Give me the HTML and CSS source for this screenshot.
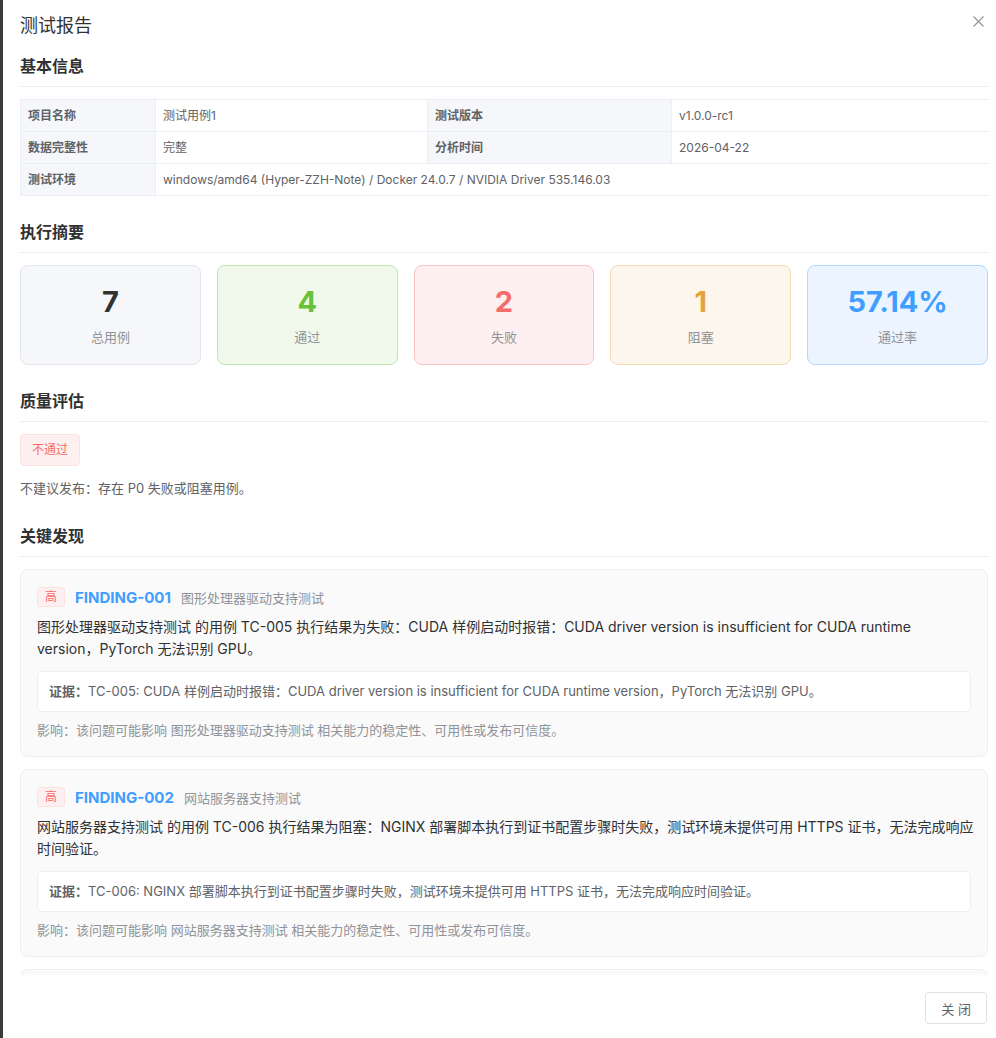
FILE: index.html
```html
<!DOCTYPE html>
<html lang="zh-CN">
<head>
<meta charset="utf-8">
<title>测试报告</title>
<link rel="stylesheet" href="styles.css">
</head>
<body>
<div class="dialog">
  <div class="dialog-header">
    <span class="dialog-title">测试报告</span>
    <button class="dialog-close" aria-label="关闭">
      <svg width="11" height="11" viewBox="0 0 11 11"><path d="M0.5 0.5 L10.5 10.5 M10.5 0.5 L0.5 10.5" stroke="#909399" stroke-width="1.1" fill="none"/></svg>
    </button>
  </div>
  <div class="dialog-body">
    <section class="section">
      <h4 class="section-title">基本信息</h4>
      <table class="desc-table">
        <colgroup><col class="c1"><col class="c2"><col class="c3"><col class="c4"></colgroup>
        <tr><td class="lbl">项目名称</td><td class="val">测试用例1</td><td class="lbl">测试版本</td><td class="val">v1.0.0-rc1</td></tr>
        <tr><td class="lbl">数据完整性</td><td class="val">完整</td><td class="lbl">分析时间</td><td class="val">2026-04-22</td></tr>
        <tr><td class="lbl">测试环境</td><td class="val" colspan="3">windows/amd64 (Hyper-ZZH-Note) / Docker 24.0.7 / NVIDIA Driver 535.146.03</td></tr>
      </table>
    </section>

    <section class="section">
      <h4 class="section-title">执行摘要</h4>
      <div class="stats">
        <div class="stat stat-total"><div class="stat-num">7</div><div class="stat-label">总用例</div></div>
        <div class="stat stat-pass"><div class="stat-num">4</div><div class="stat-label">通过</div></div>
        <div class="stat stat-fail"><div class="stat-num">2</div><div class="stat-label">失败</div></div>
        <div class="stat stat-block"><div class="stat-num">1</div><div class="stat-label">阻塞</div></div>
        <div class="stat stat-rate"><div class="stat-num">57.14%</div><div class="stat-label">通过率</div></div>
      </div>
    </section>

    <section class="section section-quality">
      <h4 class="section-title">质量评估</h4>
      <span class="tag tag-danger">不通过</span>
      <p class="verdict">不建议发布：存在 P0 失败或阻塞用例。</p>
    </section>

    <section class="section">
      <h4 class="section-title">关键发现</h4>
      <div class="finding">
        <div class="finding-head">
          <span class="tag-small">高</span>
          <span class="finding-id">FINDING-001</span>
          <span class="finding-mod">图形处理器驱动支持测试</span>
        </div>
        <p class="finding-desc">图形处理器驱动支持测试 的用例 TC-005 执行结果为失败：CUDA 样例启动时报错：CUDA driver version is insufficient for CUDA runtime version，PyTorch 无法识别 GPU。</p>
        <div class="evidence"><b>证据：</b>TC-005: CUDA 样例启动时报错：CUDA driver version is insufficient for CUDA runtime version，PyTorch 无法识别 GPU。</div>
        <p class="impact">影响：该问题可能影响 图形处理器驱动支持测试 相关能力的稳定性、可用性或发布可信度。</p>
      </div>
      <div class="finding">
        <div class="finding-head">
          <span class="tag-small">高</span>
          <span class="finding-id">FINDING-002</span>
          <span class="finding-mod">网站服务器支持测试</span>
        </div>
        <p class="finding-desc">网站服务器支持测试 的用例 TC-006 执行结果为阻塞：NGINX 部署脚本执行到证书配置步骤时失败，测试环境未提供可用 HTTPS 证书，无法完成响应时间验证。</p>
        <div class="evidence"><b>证据：</b>TC-006: NGINX 部署脚本执行到证书配置步骤时失败，测试环境未提供可用 HTTPS 证书，无法完成响应时间验证。</div>
        <p class="impact">影响：该问题可能影响 网站服务器支持测试 相关能力的稳定性、可用性或发布可信度。</p>
      </div>
      <div class="finding finding-next"></div>
    </section>
  </div>
  <div class="dialog-footer">
    <button class="btn">关 闭</button>
  </div>
</div>
</body>
</html>
```

FILE: styles.css
```css
* { box-sizing: border-box; }
html, body { margin: 0; padding: 0; height: 100%; }
body {
  background: #3a3a3a;
  font-family: "Inter", "Noto Sans CJK SC", sans-serif;
  color: #606266;
  overflow: hidden;
}
.dialog {
  margin-left: 3px;
  height: 1038px;
  background: #fff;
  display: flex;
  flex-direction: column;
  padding: 0 8px 0 17px;
}
.dialog-header {
  display: flex;
  justify-content: space-between;
  align-items: flex-start;
  padding-top: 14px;
  height: 44px;
  flex: none;
}
.dialog-title {
  font-size: 18px;
  line-height: 24px;
  color: #303133;
}
.dialog-close {
  border: 0;
  background: none;
  padding: 0;
  margin: 1px 3px 0 0;
  width: 13px;
  height: 13px;
  display: flex;
  align-items: center;
  justify-content: center;
}
.dialog-body {
  flex: 1;
  overflow: hidden;
  padding-top: 11px;
}
.section { margin-bottom: 25px; }
.section-quality { margin-bottom: 27px; }
.section-title {
  margin: 0 0 12px;
  font-size: 16px;
  font-weight: 700;
  line-height: 22px;
  color: #303133;
  padding-bottom: 9px;
  border-bottom: 1px solid #ebeef5;
}
.desc-table {
  width: 100%;
  border-collapse: collapse;
  table-layout: fixed;
  font-size: 12px;
}
.desc-table .c1 { width: 135px; }
.desc-table .c2 { width: 272px; }
.desc-table .c3 { width: 244px; }
.desc-table .c4 { width: 317px; }
.desc-table td {
  border: 1px solid #ebeef5;
  padding: 6px 7px;
  line-height: 19px;
  color: #606266;
}
.desc-table .lbl {
  background: #f5f7fa;
  font-weight: 700;
}
.stats {
  display: grid;
  grid-template-columns: repeat(5, 1fr);
  gap: 16px;
}
.stat {
  border: 1px solid #e4e7ed;
  background: #f5f7fa;
  border-radius: 8px;
  text-align: center;
  padding: 18px 0 17px;
}
.stat-num {
  font-size: 29px;
  font-weight: 700;
  line-height: 36px;
  color: #303133;
}
.stat-label {
  margin-top: 7px;
  font-size: 13px;
  line-height: 20px;
  color: #909399;
}
.stat-pass { background: #f0f9eb; border-color: #c2e7b0; }
.stat-pass .stat-num { color: #67c23a; }
.stat-fail { background: #fef0f0; border-color: #fbc4c4; }
.stat-fail .stat-num { color: #f56c6c; }
.stat-block { background: #fdf6ec; border-color: #f5dab1; }
.stat-block .stat-num { color: #e6a23c; }
.stat-rate { background: #ecf5ff; border-color: #b3d8ff; }
.stat-rate .stat-num { color: #409eff; }
.tag {
  display: inline-block;
  height: 32px;
  line-height: 30px;
  padding: 0 11px;
  font-size: 12px;
  border-radius: 4px;
  border: 1px solid #fde2e2;
  background: #fef0f0;
  color: #f56c6c;
}
.verdict {
  margin: 12px 0 0;
  font-size: 13px;
  line-height: 20px;
  color: #606266;
}
.finding {
  background: #fafafa;
  border: 1px solid #ebeef5;
  border-radius: 8px;
  padding: 16px;
  margin-bottom: 12px;
}
.finding-next { height: 60px; }
.finding-head {
  display: flex;
  align-items: center;
  gap: 10px;
  height: 22px;
}
.tag-small {
  display: inline-block;
  width: 28px;
  height: 20px;
  line-height: 18px;
  text-align: center;
  font-size: 12px;
  border: 1px solid #fde2e2;
  background: #fef0f0;
  color: #f56c6c;
  border-radius: 3px;
}
.finding-id {
  font-size: 15px;
  font-weight: 700;
  color: #409eff;
}
.finding-mod {
  font-size: 13px;
  color: #909399;
}
.finding-desc {
  margin: 8px -5px 0 0;
  font-size: 14px;
  line-height: 22px;
  color: #303133;
}
.evidence {
  margin-top: 11px;
  background: #fff;
  border: 1px solid #ebeef5;
  border-radius: 4px;
  padding: 10px 11px;
  font-size: 13px;
  line-height: 19px;
  color: #606266;
}
.evidence b { font-weight: 700; }
.impact {
  margin: 8px 0 0;
  font-size: 13px;
  line-height: 20px;
  color: #909399;
}
.dialog-footer {
  flex: none;
  height: 63px;
  display: flex;
  justify-content: flex-end;
  align-items: flex-start;
  padding-top: 17px;
}
.btn {
  height: 32px;
  padding: 0 15px;
  font-family: inherit;
  font-size: 13px;
  color: #606266;
  background: #fff;
  border: 1px solid #dcdfe6;
  border-radius: 4px;
  margin-right: 1px;
}
```
